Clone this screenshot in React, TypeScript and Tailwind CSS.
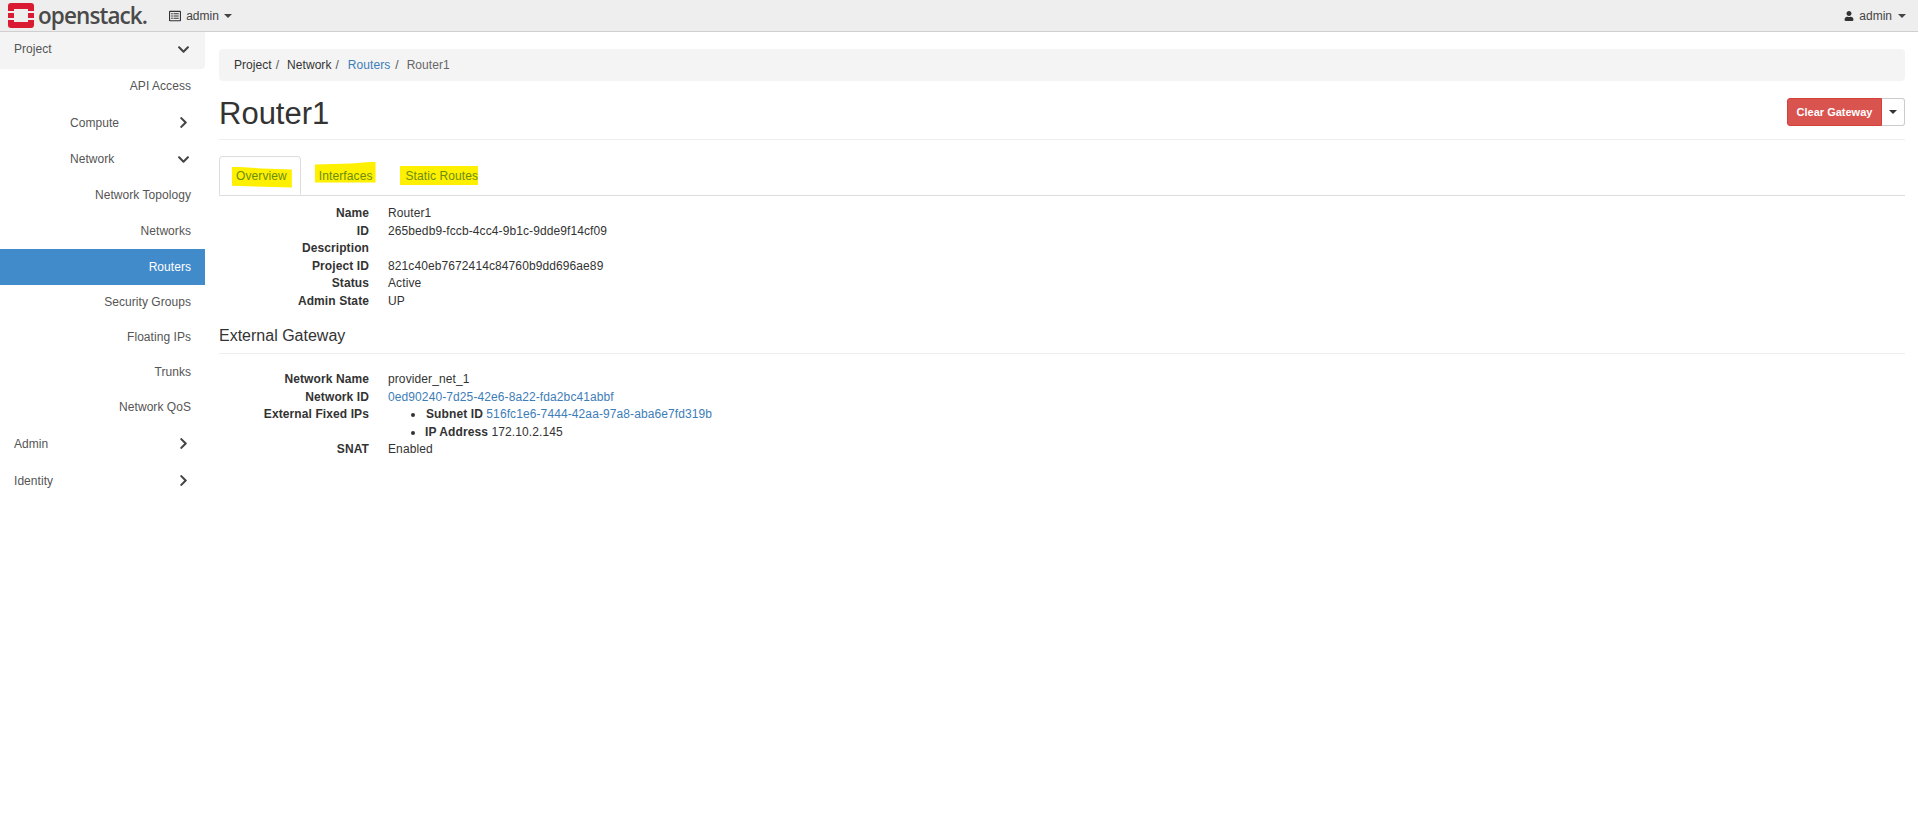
import type { ReactNode } from 'react';
import { FaChevronDown, FaChevronRight, FaRegListAlt, FaUser } from 'react-icons/fa';

const Caret = () => (
  <span className="inline-block w-0 h-0 border-x-[4px] border-x-transparent border-t-[4px] border-t-current" />
);

function Logo() {
  return (
    <svg width="26" height="25" viewBox="0 0 26 25" className="shrink-0">
      <path
        fill="#da1a32"
        d="M3 0h20a3 3 0 0 1 3 3v5h-6V6H6v2H0V3a3 3 0 0 1 3-3zM0 10h6v5H0zM20 10h6v5h-6zM0 17h6v2h14v-2h6v5a3 3 0 0 1-3 3H3a3 3 0 0 1-3-3z"
      />
    </svg>
  );
}

function TopBar() {
  return (
    <header className="h-8 flex items-center justify-between bg-[#eeeeee] border-b border-[#cfcfcf] text-[#444] shrink-0">
      <div className="flex items-center">
        <div className="flex items-center ml-2 gap-[4px] h-8">
          <Logo />
          <span className="font-['Open_Sans',sans-serif] font-semibold text-[22.5px] leading-[30px] text-[#4a4a4a] tracking-[-0.9px]">openstack.</span>
        </div>
        <div className="flex items-center ml-[22px] gap-[5px] text-[12px]">
          <FaRegListAlt className="text-[12px] text-[#333]" />
          <span>admin</span>
          <Caret />
        </div>
      </div>
      <div className="flex items-center mr-[12px] gap-[5px] text-[12px]">
        <FaUser className="text-[10px] text-[#333]" />
        <span className="mr-[1px]">admin</span>
        <Caret />
      </div>
    </header>
  );
}

function Chevron({ open }: { open?: boolean }) {
  return open
    ? <FaChevronDown className="text-[13px] text-[#444]" />
    : <FaChevronRight className="text-[13px] text-[#444]" />;
}

function Section({ label, open, indent }: { label: string; open?: boolean; indent?: boolean }) {
  return (
    <div className={`flex items-center justify-between pr-[15px] text-[12px] text-[#555] ${open ? 'h-[36px]' : 'h-[37px]'} ${indent ? 'pl-[70px]' : 'pl-[14px]'}`}>
      <span>{label}</span>
      <Chevron open={open} />
    </div>
  );
}

function Item({ label, active, tall }: { label: string; active?: boolean; tall?: boolean }) {
  return (
    <div className={`flex items-center justify-end pr-[14px] text-[12px] ${tall ? 'h-[36px]' : 'h-[35px] pb-[2px]'} ${active ? 'bg-[#428bca] text-white font-medium' : 'text-[#555]'}`}>
      {label}
    </div>
  );
}

function Sidebar() {
  return (
    <aside className="w-[205px] shrink-0 tracking-[0.05px]">
      <div className="flex items-center justify-between h-[37px] pb-[3px] pl-[14px] pr-[15px] bg-[#f4f4f4] rounded-br-[4px] text-[12px] text-[#555]">
        <span>Project</span>
        <Chevron open />
      </div>
      <Item label="API Access" />
      <Section label="Compute" indent />
      <Section label="Network" open indent />
      <Item label="Network Topology" tall />
      <Item label="Networks" tall />
      <Item label="Routers" active tall />
      <Item label="Security Groups" />
      <Item label="Floating IPs" />
      <Item label="Trunks" />
      <Item label="Network QoS" />
      <Section label="Admin" />
      <Section label="Identity" />
    </aside>
  );
}

function Row({ label, children }: { label: string; children?: ReactNode }) {
  return (
    <div className="flex leading-[17.5px] text-[12px] text-[#333] tracking-[0.1px]">
      <div className="w-[150px] text-right font-bold shrink-0">{label}</div>
      <div className="ml-[19px]">{children}</div>
    </div>
  );
}

function Tab({ label, className, mark }: { label: string; className: string; mark: string }) {
  return (
    <div className={`h-[39px] flex items-center text-[12px] text-[#6a8d10] tracking-[0.1px] rounded-t-[4px] ${className}`}>
      <span className={`bg-[#fff000] leading-[14px] ${mark}`}>{label}</span>
    </div>
  );
}

export default function App() {
  return (
    <div className="min-h-[840px] bg-white flex flex-col font-['Liberation_Sans',Arial,sans-serif]">
      <TopBar />
      <div className="flex flex-1">
        <Sidebar />
        <main className="flex-1 pl-[14px] pr-[13px] pt-[17px]">
          <div className="h-8 flex items-center px-[15px] bg-[#f4f4f4] rounded-[4px] text-[12px] tracking-[0.05px]">
            <span className="text-[#333]">Project</span>
            <span className="text-[#555] ml-[4px] mr-[8px]">/</span>
            <span className="text-[#333]">Network</span>
            <span className="text-[#555] ml-[4px] mr-[9px]">/</span>
            <span className="text-[#3d7db8]">Routers</span>
            <span className="text-[#555] ml-[5px] mr-[8px]">/</span>
            <span className="text-[#666]">Router1</span>
          </div>
          <div className="flex items-center justify-between h-[59px] border-b border-[#eeeeee]">
            <h1 className="text-[31px] leading-[36px] text-[#333] mt-[8px]">Router1</h1>
            <div className="flex h-[28px] mt-[4px] text-[11px] font-bold">
              <div className="flex items-center w-[95px] justify-center bg-[#d9534f] border border-[#d43f3a] text-white rounded-l-[3px]">Clear Gateway</div>
              <div className="flex items-center px-[7px] bg-white border border-[#ccc] border-l-0 text-[#333] rounded-r-[3px]"><Caret /></div>
            </div>
          </div>
          <div className="flex mt-[16px] border-b border-[#ddd]">
            <Tab
              label="Overview"
              className="border border-[#ddd] border-b-white -mb-px bg-white pl-[12px] pr-[8px]"
              mark="pl-[4px] pr-[5px] pt-[2px] pb-[5px] mt-[3px] [clip-path:polygon(0_0,50%_2px,100%_3px,100%_100%,0_92%)]"
            />
            <Tab
              label="Interfaces"
              className="ml-[14px] pr-[24px]"
              mark="pl-[4px] pr-[3px] pt-[7px] mb-[7px] [clip-path:polygon(0_3px,60%_2px,100%_0,100%_100%,0_100%)]"
            />
            <Tab label="Static Routes" className="" mark="pl-[6px] pt-[3px] pb-[2px] mb-[1px]" />
          </div>
          <div className="mt-[9px]">
            <Row label="Name">Router1</Row>
            <Row label="ID">265bedb9-fccb-4cc4-9b1c-9dde9f14cf09</Row>
            <Row label="Description" />
            <Row label="Project ID">821c40eb7672414c84760b9dd696ae89</Row>
            <Row label="Status">Active</Row>
            <Row label="Admin State">UP</Row>
          </div>
          <h2 className="mt-[17px] pb-[8px] border-b border-[#eeeeee] text-[16px] leading-[18px] text-[#333]">External Gateway</h2>
          <div className="mt-[17px]">
            <Row label="Network Name">provider_net_1</Row>
            <Row label="Network ID"><span className="text-[#3d7db8]">0ed90240-7d25-42e6-8a22-fda2bc41abbf</span></Row>
            <Row label="External Fixed IPs">
              <ul className="list-disc pl-[37px]">
                <li><strong className="ml-[1px]">Subnet ID</strong> <span className="text-[#3d7db8]">516fc1e6-7444-42aa-97a8-aba6e7fd319b</span></li>
                <li><strong>IP Address</strong> 172.10.2.145</li>
              </ul>
            </Row>
            <Row label="SNAT">Enabled</Row>
          </div>
        </main>
      </div>
    </div>
  );
}
